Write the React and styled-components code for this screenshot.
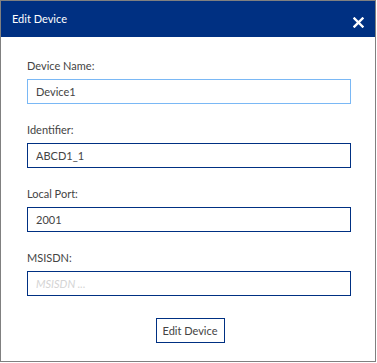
import styled, { createGlobalStyle } from 'styled-components';

const GlobalStyle = createGlobalStyle`
  body {
    margin: 0;
    background: #ffffff;
    font-family: Lato, "Open Sans", sans-serif;
  }
`;

const fields = [
  { label: 'Device Name:', value: 'Device1', focused: true },
  { label: 'Identifier:', value: 'ABCD1_1' },
  { label: 'Local Port:', value: '2001' },
  { label: 'MSISDN:', value: '', placeholder: 'MSISDN ...' },
];

export default function App() {
  return (
    <>
      <GlobalStyle />
      <Dialog>
        <Header>
          <Title>Edit Device</Title>
          <CloseButton type="button" aria-label="Close">
            <svg width="11" height="11" viewBox="0 0 11 11">
              <path d="M1.5 1.5 L9.5 9.5 M9.5 1.5 L1.5 9.5" stroke="#ffffff" strokeWidth="2.4" strokeLinecap="square" />
            </svg>
          </CloseButton>
        </Header>
        <Body>
          {fields.map((f) => (
            <Field key={f.label}>
              <Label>{f.label}</Label>
              <Input defaultValue={f.value} placeholder={f.placeholder} focused={f.focused} />
            </Field>
          ))}
          <SubmitButton type="button">Edit Device</SubmitButton>
        </Body>
      </Dialog>
    </>
  );
}

const Dialog = styled.div`
  box-sizing: border-box;
  width: 376px;
  height: 362px;
  border: 1px solid #808080;
  background: #ffffff;
  display: flex;
  flex-direction: column;
`;

const Header = styled.div`
  height: 36px;
  background: #003082;
  display: flex;
  align-items: center;
  justify-content: space-between;
  padding: 0 11px 0 11px;
`;

const Title = styled.span`
  color: #ffffff;
  font-size: 11px;
  margin-top: -1px;
`;

const CloseButton = styled.button`
  background: none;
  border: none;
  padding: 0;
  margin-top: 6px;
  display: flex;
  cursor: pointer;
`;

const Body = styled.div`
  display: flex;
  flex-direction: column;
  padding: 21px 24px 0 26px;
  gap: 18px;
`;

const Field = styled.div`
  display: flex;
  flex-direction: column;
  gap: 5px;
`;

const Label = styled.label`
  font-size: 11px;
  line-height: 16px;
  color: #444444;
`;

const Input = styled.input`
  box-sizing: border-box;
  height: 25px;
  width: 100%;
  border: 1px solid ${(p) => (p.focused ? '#7ab8f5' : '#003082')};
  outline: none;
  padding: 0 8px;
  font-family: Lato, "Open Sans", sans-serif;
  font-size: 11px;
  color: #444444;
  background: #ffffff;

  &::placeholder {
    color: #d4d4d4;
    font-style: italic;
  }
`;

const SubmitButton = styled.button`
  align-self: center;
  margin-top: 4px;
  margin-left: 2px;
  box-sizing: border-box;
  width: 69px;
  height: 25px;
  border: 1px solid #003082;
  background: #ffffff;
  font-family: Lato, "Open Sans", sans-serif;
  font-size: 11px;
  color: #444444;
  padding: 0;
  cursor: pointer;
`;
